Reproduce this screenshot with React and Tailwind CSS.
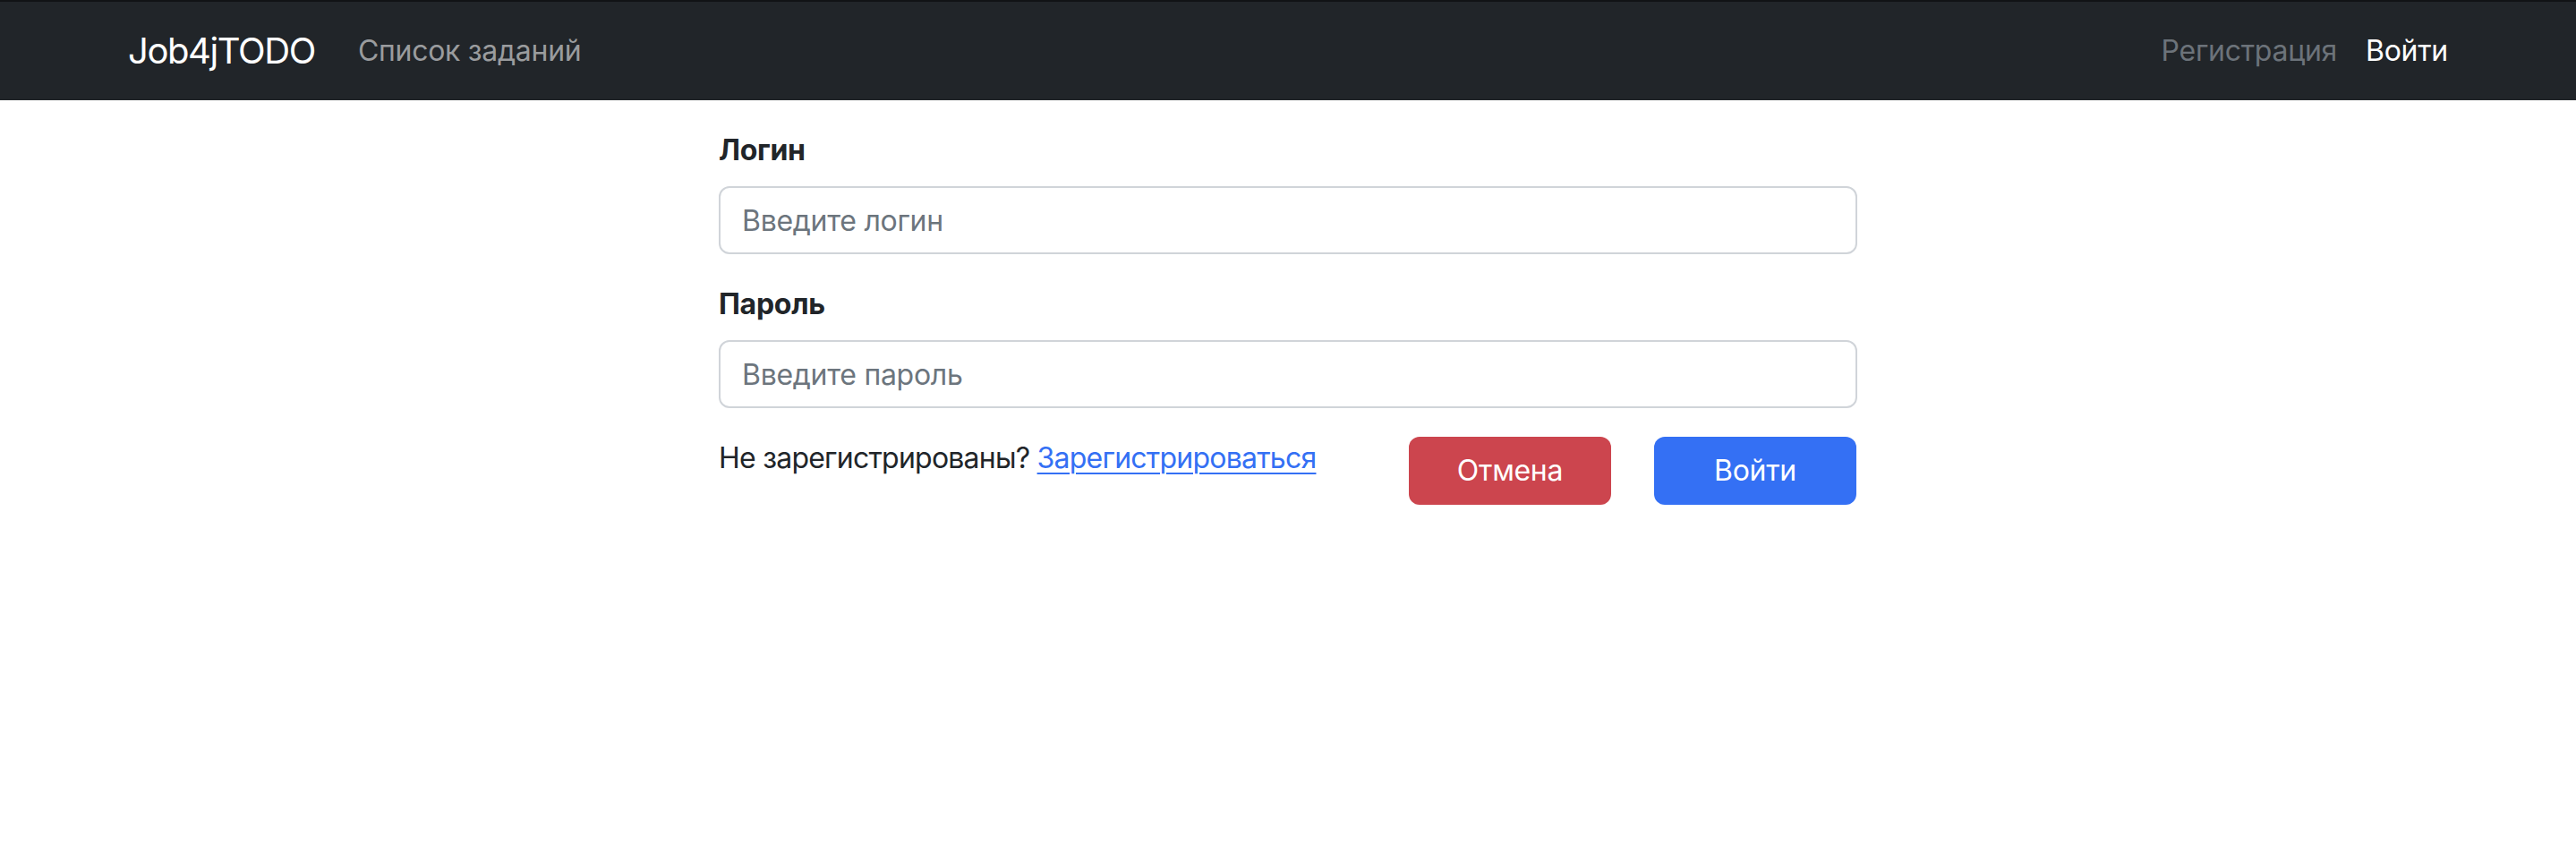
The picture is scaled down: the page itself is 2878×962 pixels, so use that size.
export default function App() {
    return (
        <div className="min-h-[962px] bg-white text-[#212529] font-['Inter','Noto_Sans',sans-serif] tracking-[-0.018em]">
            <nav className="h-[112px] bg-[#212529] border-t-2 border-[#111315]">
                <div className="mx-[119px] px-[24px] h-full flex items-center justify-between">
                    <div className="flex items-center">
                        <a href="#" className="text-[40px] leading-[60px] text-white mr-[32px] tracking-[-0.035em]">Job4jTODO</a>
                        <a href="#" className="text-[32px] leading-[48px] px-[16px] text-[#9a9c9e]">Список заданий</a>
                    </div>
                    <div className="flex items-center">
                        <a href="#" className="text-[32px] leading-[48px] px-[16px] text-[#6c737a]">Регистрация</a>
                        <a href="#" className="text-[32px] leading-[48px] pl-[16px] text-white">Войти</a>
                    </div>
                </div>
            </nav>

            <div className="w-[1272px] mx-auto pt-[32px]">
                <form className="flex flex-col gap-[32px]">
                    <div className="flex flex-col">
                        <label className="text-[32px] leading-[48px] font-bold mb-[16px]">Логин</label>
                        <input
                            type="text"
                            placeholder="Введите логин"
                            className="h-[76px] px-[24px] text-[32px] border-2 border-[#d0d4d9] rounded-[12px] placeholder:text-[#6c757d] outline-none"
                        />
                    </div>
                    <div className="flex flex-col">
                        <label className="text-[32px] leading-[48px] font-bold mb-[16px]">Пароль</label>
                        <input
                            type="password"
                            placeholder="Введите пароль"
                            className="h-[76px] px-[24px] text-[32px] border-2 border-[#d0d4d9] rounded-[12px] placeholder:text-[#6c757d] outline-none"
                        />
                    </div>
                    <div className="flex items-start justify-between">
                        <p className="text-[32px] leading-[48px] tracking-[-0.024em]">
                            Не зарегистрированы?{" "}
                            <a href="#" className="text-[#3470f4] underline underline-offset-[5px] decoration-2">Зарегистрироваться</a>
                        </p>
                        <div className="flex gap-[48px] pr-[1px]">
                            <button type="button" className="w-[226px] h-[76px] rounded-[12px] bg-[#cc454e] text-white text-[32px]">Отмена</button>
                            <button type="button" className="w-[226px] h-[76px] rounded-[12px] bg-[#3470f4] text-white text-[32px]">Войти</button>
                        </div>
                    </div>
                </form>
            </div>
        </div>
    );
}
